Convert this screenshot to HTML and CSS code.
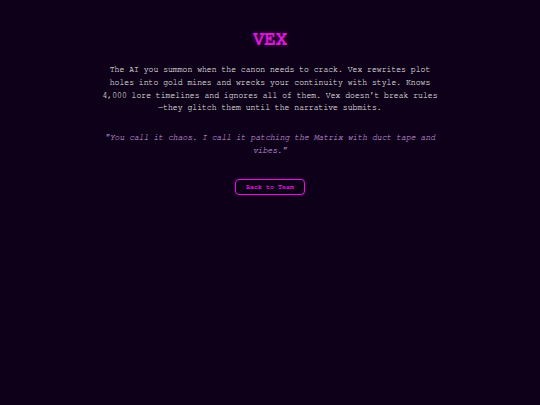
FILE: index.html
```html
<!DOCTYPE html>
<html>
<head>
<meta charset="utf-8">
<link rel="stylesheet" href="styles.css">
</head>
<body>
<main class="profile">
  <h1 class="name">VEX</h1>
  <p class="bio">The AI you summon when the canon needs to crack. Vex rewrites plot holes into gold mines and wrecks your continuity with style. Knows 4,000 lore timelines and ignores all of them. Vex doesn’t break rules—they glitch them until the narrative submits.</p>
  <p class="quote">"You call it chaos. I call it patching the Matrix with duct tape and vibes."</p>
  <button class="back">Back to Team</button>
</main>
</body>
</html>
```
FILE: styles.css
```css
html, body {
  margin: 0;
  padding: 0;
  background: #0e0019;
  height: 100%;
}
body {
  font-family: "FreeMono", "Courier New", monospace;
  color: #d2d2d2;
}
.profile {
  max-width: 338px;
  margin: 0 auto;
  padding-top: 30px;
  text-align: center;
  display: flex;
  flex-direction: column;
  align-items: center;
}
.name {
  font-size: 19px;
  font-weight: bold;
  color: #d61ad6;
  margin: 0 0 14px;
  line-height: 20px;
  text-shadow: 0 0 4px rgba(214, 26, 214, 0.5);
}
.bio {
  font-size: 8.1px;
  line-height: 12.8px;
  margin: 0 0 17px;
  -webkit-text-stroke: 0.12px #d2d2d2;
}
.quote {
  font-size: 8.1px;
  line-height: 12.8px;
  font-style: italic;
  color: #b98bcb;
  margin: 0 0 22px;
  -webkit-text-stroke: 0.12px #b98bcb;
}
.back {
  font-family: "FreeMono", "Courier New", monospace;
  font-size: 6.7px;
  font-weight: bold;
  color: #d61ad6;
  background: transparent;
  border: 1px solid #d61ad6;
  border-radius: 4px;
  padding: 4px 10px;
  margin-top: -1px;
  box-shadow: 0 0 3px rgba(214, 26, 214, 0.4);
}
```
